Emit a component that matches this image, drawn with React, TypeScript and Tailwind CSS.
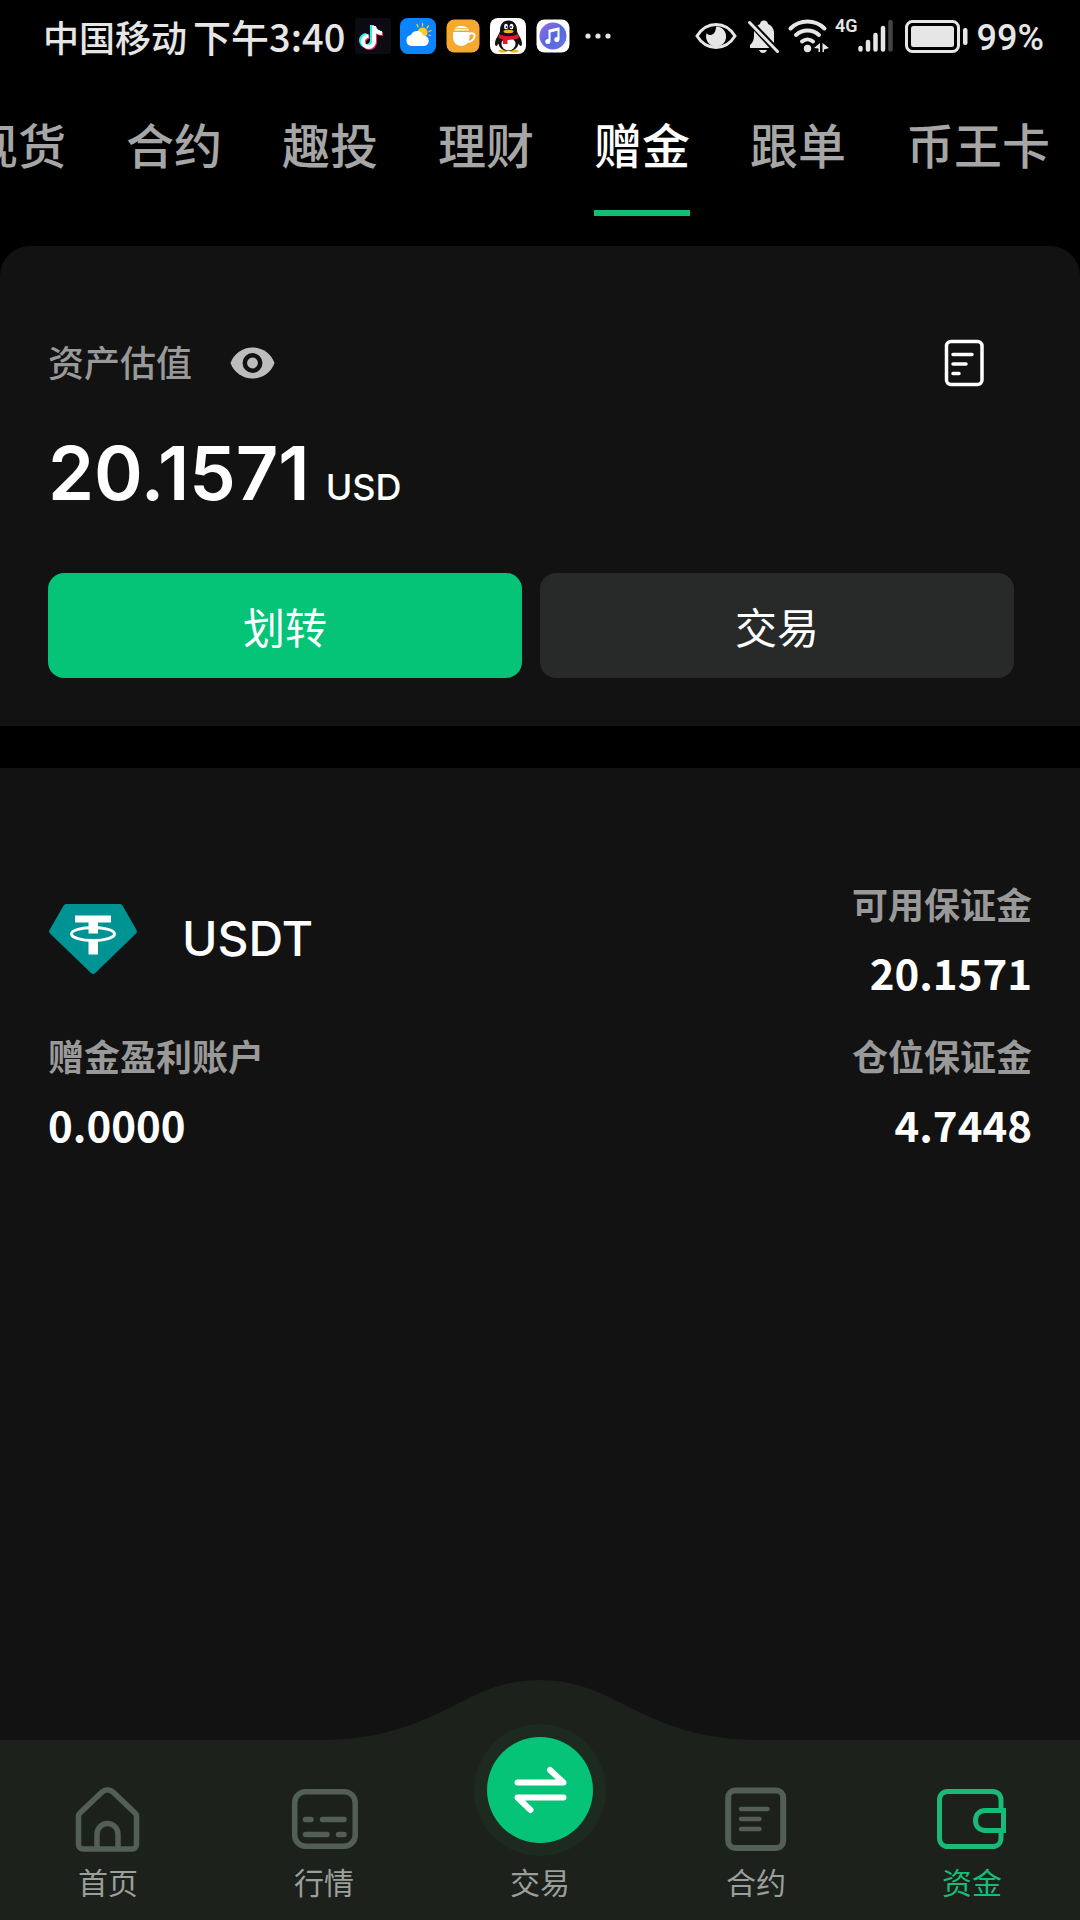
import type { ReactNode } from "react";
import clsx from "clsx";

const tabs = ["现货", "合约", "趣投", "理财", "赠金", "跟单", "币王卡"];
const activeTab = "赠金";

const navItems = [
  { label: "首页", icon: <HomeIcon /> },
  { label: "行情", icon: <MarketIcon /> },
  { label: "交易", icon: <TradeIcon /> },
  { label: "合约", icon: <ContractIcon /> },
  { label: "资金", icon: <WalletIcon />, active: true }
];

function StatusBar() {
  return (
    <header className="flex h-[72px] shrink-0 items-center justify-between pr-9 pl-[43px] text-[#e6e6e6]">
      <div className="flex items-center">
        <span className="text-[36px] leading-[60px] font-medium">中国移动</span>
        <span className="ml-1.5 text-[38px] leading-[60px] font-medium">下午3:40</span>
        <div className="ml-2.5 flex items-center gap-[9px]">
          <svg className="size-9" viewBox="0 0 36 36" aria-hidden="true">
            <rect width="36" height="36" rx="2" fill="#0b0b14" />
            <g fill="none" strokeWidth="4">
              <path d="M18 8v15.500a5.500 5.500 0 1 1-5.500-5.500M18 9c1 4 4 6 8 6" stroke="#25f4ee" transform="translate(-1 -1)" />
              <path d="M18 8v15.500a5.500 5.500 0 1 1-5.500-5.500M18 9c1 4 4 6 8 6" stroke="#fe2c55" transform="translate(2 1)" />
              <path d="M18 8v15.500a5.500 5.500 0 1 1-5.500-5.500M18 9c1 4 4 6 8 6" stroke="#fff" transform="translate(1 0)" />
            </g>
          </svg>
          <svg className="size-9" viewBox="0 0 36 36" aria-hidden="true">
            <rect width="36" height="36" rx="8" fill="#0a84ff" />
            <circle cx="22.500" cy="14.500" r="5" fill="#ffc928" />
            <path d="M17 6.500l1 2.500M22.500 5.500v2.500M28.500 8l-1.500 2M31 12.500l-2 1M30.500 17.500l-1.500-.5" stroke="#ffc928" strokeWidth="1.300" strokeLinecap="round" />
            <path d="M11.500 28a5.500 5.500 0 0 1-.500-10.900 6.500 6.500 0 0 1 12.300.4A5.300 5.300 0 0 1 24.500 28z" fill="#fff" />
          </svg>
          <svg className="size-9" viewBox="0 0 36 36" aria-hidden="true">
            <rect x="1.500" y="1.500" width="33" height="33" rx="8" fill="#f6a92f" />
            <path d="M8 14h16.500v5c0 5-3.500 9-8.200 9S8 24 8 19zM9 12.500c.5-3.500 4-5 8-4.500 4 .5 6.500 1.500 7 4.500z" fill="#fff" />
            <path d="M9.500 11.500c3-3 8 .5 13.500-1" fill="none" stroke="#f6a92f" strokeWidth="1" />
            <path d="M24 16c4-2 6 0 5.500 2.500S26.500 24 22 24" fill="none" stroke="#fff" strokeWidth="2" />
          </svg>
          <svg className="size-9" viewBox="0 0 36 36" aria-hidden="true">
            <rect width="36" height="36" rx="8" fill="#fff" />
            <ellipse cx="13" cy="33" rx="4.500" ry="1.500" fill="#f5b421" />
            <ellipse cx="24" cy="33" rx="4.500" ry="1.500" fill="#f5b421" />
            <path d="M18.500 2.500c-6 0-8.500 4.500-8.500 10 0 3.500-5 8-5 13 0 1.500.5 2.500 1.200 2.500s1.800-1.500 2.300-2.500C9 30 13 33 18.500 33s9.500-3 10-7.500c.5 1 1.600 2.500 2.300 2.500s1.200-1 1.200-2.500c0-5-5-9.500-5-13 0-5.500-2.500-10-8.500-10z" fill="#111" />
            <ellipse cx="18.500" cy="26" rx="7" ry="6.500" fill="#fff" />
            <ellipse cx="16" cy="8.500" rx="2" ry="2.700" fill="#fff" />
            <ellipse cx="21.500" cy="8.500" rx="2" ry="2.700" fill="#fff" />
            <circle cx="16.500" cy="9" r=".9" fill="#111" />
            <circle cx="21" cy="9" r=".9" fill="#111" />
            <ellipse cx="18.500" cy="13.500" rx="5" ry="1.700" fill="#f5b421" />
            <path d="M9 16c6 3 13 3 19 0l1 4c-4 1.500-8 2-11.500 2v4h-4.500v-4.500L8.500 20z" fill="#e3172b" />
          </svg>
          <svg className="size-9" viewBox="0 0 36 36" aria-hidden="true">
            <defs>
              <linearGradient id="music" x1="0" y1="0" x2="1" y2="1">
                <stop offset="0" stopColor="#9a6bea" />
                <stop offset=".5" stopColor="#5468dc" />
                <stop offset="1" stopColor="#6a74e8" />
              </linearGradient>
            </defs>
            <rect x="1.500" y="1.500" width="33" height="33" rx="8" fill="#fff" />
            <circle cx="18" cy="18" r="13.500" fill="url(#music)" />
            <path d="M14.500 23.500V12.500l9-2v11" fill="none" stroke="#fff" strokeWidth="2" />
            <path d="M14 13.500l10-2.500" stroke="#fff" strokeWidth="2.500" />
            <circle cx="12.800" cy="23.500" r="2.500" fill="#fff" />
            <circle cx="21.800" cy="21.500" r="2.500" fill="#fff" />
          </svg>
          <svg className="size-9" viewBox="0 0 36 36" fill="#e6e6e6" aria-hidden="true">
            <circle cx="8" cy="18" r="2.600" />
            <circle cx="18" cy="18" r="2.600" />
            <circle cx="28" cy="18" r="2.600" />
          </svg>
        </div>
      </div>

      <div className="flex items-center">
        <svg className="h-9 w-[42px]" viewBox="0 0 42 36" aria-hidden="true">
          <path d="M2 18C7 10 13 6.500 21 6.500S35 10 40 18c-5 8-11 11.500-19 11.500S7 26 2 18z" fill="none" stroke="#e6e6e6" strokeWidth="3" />
          <path d="M21 8.500a10 10 0 1 1-9.300 6.500c1.300 1.800 3 2.500 5 1.800 3-1 4.300-4.300 4.300-8.300z" fill="#e6e6e6" />
        </svg>
        <svg className="ml-2.5 h-9 w-8" viewBox="0 0 32 36" aria-hidden="true">
          <path d="M7 13l15.500 17H3v-3c2.500-2 4-5 4-9zM10.500 7.500l2.500-1.500c.4-2 1.500-3.500 4-3.500s3.500 1.500 4 3.500c4 1.500 6 5 6 9.500V25zM12 32h8c-1 2-2 3-4 3s-3-1-4-3z" fill="#e6e6e6" />
          <path d="M2.500 4.500l28 29" stroke="#e6e6e6" strokeWidth="3" strokeLinecap="round" />
        </svg>
        <svg className="ml-2 h-9 w-[42px]" viewBox="0 0 42 36" fill="none" aria-hidden="true">
          <g stroke="#e6e6e6" strokeWidth="4" strokeLinecap="round">
            <path d="M3.500 10.500c9.500-9.300 24.500-9.300 34 0" />
            <path d="M9 17c6.500-6 16.500-6 23 0" />
            <path d="M15 23.500c3.300-2.800 7.700-2.800 11 0" />
          </g>
          <circle cx="20.500" cy="30.500" r="3.700" fill="#e6e6e6" />
          <path d="M33 25v9h-1.500v-3.500L27 30zM35.500 25v9h1.500v-2.500l5-1.500z" fill="#e6e6e6" />
        </svg>
        <span className="mb-5 ml-1.5 font-['Roboto'] text-[18px] leading-[20px] font-semibold">4G</span>
        <svg className="h-9 w-9" viewBox="0 0 36 36" aria-hidden="true">
          <g stroke="#e6e6e6" strokeWidth="4.500" strokeLinecap="round">
            <path d="M2.500 30v1.500M10 24v7.500M17.500 17v14.500M25 10v21.500" />
            <path d="M32.500 4v27.500" stroke="#444" />
          </g>
        </svg>
        <svg className="ml-[11px] h-9 w-16" viewBox="0 0 64 36" aria-hidden="true">
          <rect x="1.500" y="3.500" width="52" height="30" rx="6" fill="none" stroke="#e6e6e6" strokeWidth="3" />
          <rect x="6" y="8" width="43" height="21" rx="2.500" fill="#e6e6e6" />
          <rect x="58" y="10" width="4.500" height="17" rx="2" fill="#e6e6e6" />
        </svg>
        <span className="ml-2 pt-1 font-['Roboto'] text-[36px] leading-[60px] font-medium">99%</span>
      </div>
    </header>
  );
}

function HomeIcon() {
  return (
    <svg className="size-[72px]" viewBox="0 0 72 72" fill="none" stroke="currentColor" strokeWidth="5.500" aria-hidden="true">
      <path d="M6.500 32.500v28a4.500 4.500 0 0 0 4.500 4.500h49a4.500 4.500 0 0 0 4.500-4.500v-28c0-1.500-.5-2.500-1.500-3.500L41.500 8.500c-3.500-3.500-8.500-3.500-12 0L8 29c-1 1-1.500 2-1.500 3.500z" />
      <path d="M25 65V50a10.500 10.500 0 0 1 21 0v15" />
    </svg>
  );
}

function MarketIcon() {
  return (
    <svg className="size-[72px]" viewBox="0 0 72 72" fill="none" stroke="currentColor" strokeWidth="5.500" strokeLinecap="round" aria-hidden="true">
      <rect x="6.700" y="7.700" width="60.500" height="54.500" rx="11" />
      <path d="M17.500 35.500h5.500M34.500 35.500H56M17.500 50.500H39M50.500 50.500H56" />
    </svg>
  );
}

function TradeIcon() {
  return (
    <span className="flex size-[132px] shrink-0 items-center justify-center rounded-full bg-[#1c2a1f]">
      <span className="flex size-[106px] items-center justify-center rounded-full bg-[#05c377]">
        <svg className="size-[60px]" viewBox="0 0 60 60" fill="none" stroke="#fff" strokeWidth="6" strokeLinecap="round" strokeLinejoin="round" aria-hidden="true">
          <path d="M7.500 22.500H53.500L40 10" />
          <path d="M53.500 37.500H7.500L20.500 50" />
        </svg>
      </span>
    </span>
  );
}

function ContractIcon() {
  return (
    <svg className="size-[72px]" viewBox="0 0 72 72" fill="none" stroke="currentColor" strokeLinecap="round" aria-hidden="true">
      <rect x="8.200" y="6.500" width="55" height="57.500" rx="7" strokeWidth="6" />
      <path d="M21 25h26.500M21 35h18.500M21 45h18.500" strokeWidth="4.500" />
    </svg>
  );
}

function WalletIcon() {
  return (
    <svg className="size-[72px]" viewBox="0 0 72 72" fill="none" stroke="currentColor" strokeWidth="5" aria-hidden="true">
      <path d="M65 24.500V16c0-5-3.500-8.500-8.500-8.500H12c-5 0-8.500 3.500-8.500 8.500v38c0 5 3.500 8.500 8.500 8.500h44.500c5 0 8.500-3.500 8.500-8.500v-8.500" />
      <path d="M67.500 26.500H49.500c-6 0-10 4-10 10s4 10 10 10h18z" />
    </svg>
  );
}

function TetherLogo() {
  return (
    <svg className="h-[72px] w-[90px]" viewBox="0 0 90 72" aria-hidden="true">
      <path d="M19 1h52.500c1.500 0 2.500.5 3.200 1.800L88.500 27c.6 1.200.5 2.500-.5 3.500L47 70.300c-1.200 1.100-2.500 1.100-3.700 0L2 30.500c-1-1-1.100-2.300-.5-3.500L15.500 2.800C16.200 1.500 17.500 1 19 1z" fill="#009393" />
      <path d="M27 12.500h36v7H50v11h-9.500v-11H27zM40.500 37H50v14.500h-9.500z" fill="#fff" />
      <ellipse cx="45" cy="31" rx="21.500" ry="6.500" fill="none" stroke="#fff" strokeWidth="3" />
    </svg>
  );
}

function Balance({ label, value, right }: { label: string; value: ReactNode; right?: boolean }) {
  return (
    <dl className={clsx("font-bold", right && "text-right")}>
      <dt className="text-[36px] leading-[54px] text-[#999]">{label}</dt>
      <dd className="mt-3 text-[42px] leading-[60px]">{value}</dd>
    </dl>
  );
}

export default function App() {
  return (
    <div className="flex min-h-screen flex-col overflow-hidden bg-black font-['Noto_Sans_CJK_SC',sans-serif] text-white">
      <StatusBar />

      <nav className="-ml-[30px] flex h-[174px] shrink-0 gap-[60px] overflow-hidden" aria-label="账户">
        {tabs.map((tab) => (
          <button
            key={tab}
            type="button"
            className={clsx(
              "mb-[30px] shrink-0 border-b-6 pt-1 text-[48px] leading-[72px] font-medium",
              tab === activeTab ? "border-[#12bd77] text-white" : "border-transparent text-[#a6a6a6]"
            )}
          >
            {tab}
          </button>
        ))}
      </nav>

      <section className="shrink-0 rounded-t-[30px] bg-[#121212] pt-[93px] pr-[66px] pb-12 pl-12">
        <div className="flex h-12 items-center justify-between pr-[30px]">
          <div className="flex items-center gap-[38px]">
            <h2 className="pb-1 text-[36px] leading-[48px] font-medium text-[#999]">资产估值</h2>
            <button type="button" aria-label="隐藏资产">
              <svg className="h-8 w-[45px]" viewBox="0 0 45 32" aria-hidden="true">
                <path d="M22.500.5C12.500.5 4 6.500.500 16c3.500 9.500 12 15.500 22 15.500S41 25.500 44.500 16C41 6.500 32.500.500 22.500.500z" fill="#bdbdbd" />
                <circle cx="22.500" cy="16" r="7.700" fill="none" stroke="#121212" strokeWidth="4.500" />
              </svg>
            </button>
          </div>
          <button type="button" aria-label="资金记录">
            <svg className="h-12 w-10" viewBox="0 0 40 48" fill="none" stroke="#fff" strokeWidth="3.500" strokeLinecap="round" aria-hidden="true">
              <rect x="2.500" y="2.500" width="35.500" height="43" rx="4.500" />
              <path d="M9 15.500h19M9 25h13M9 34.500h6" />
            </svg>
          </button>
        </div>

        <p className="mt-[38px] mb-[52px] font-['Inter',sans-serif] text-[74px] leading-[96px] font-semibold">
          20.1571
          <span className="ml-4 text-[36px] leading-[48px] font-medium">USD</span>
        </p>

        <div className="grid grid-cols-2 gap-[18px] text-[42px] leading-[60px]">
          <button type="button" className="h-[105px] rounded-2xl bg-[#05c377]">
            划转
          </button>
          <button type="button" className="h-[105px] rounded-2xl bg-[#282929]">
            交易
          </button>
        </div>
      </section>

      <section className="mt-[42px] grow bg-[#121212] px-12 pt-[108px]">
        <div className="grid grid-cols-2 gap-y-[26px]">
          <div className="flex items-center gap-11">
            <TetherLogo />
            <h3 className="font-['Inter',sans-serif] text-[48px] leading-[60px] font-medium">USDT</h3>
          </div>
          <Balance label="可用保证金" value="20.1571" right />
          <Balance label="赠金盈利账户" value="0.0000" />
          <Balance label="仓位保证金" value="4.7448" right />
        </div>
      </section>

      <nav className="relative h-[180px] shrink-0 bg-[#1c211c]" aria-label="主导航">
        <svg className="absolute bottom-full left-1/2 h-[60px] w-[440px] -translate-x-1/2" viewBox="0 0 440 60" aria-hidden="true">
          <path d="M0 60c60 0 98-16 137-36C168 8 190 0 220 0s52 8 83 24c39 20 77 36 137 36z" fill="#1c211c" />
        </svg>
        <ul className="relative grid grid-cols-5">
          {navItems.map((item) => (
            <li key={item.label}>
              <a href="#" className={clsx("flex flex-col items-center", item.active ? "text-[#1bb977]" : "text-[#535f54]")}>
                <span className="flex h-[116px] w-full items-end justify-center">{item.icon}</span>
                <span className={clsx("mt-1 text-[30px] leading-[42px]", !item.active && "text-[#9b9f9b]")}>{item.label}</span>
              </a>
            </li>
          ))}
        </ul>
      </nav>
    </div>
  );
}
